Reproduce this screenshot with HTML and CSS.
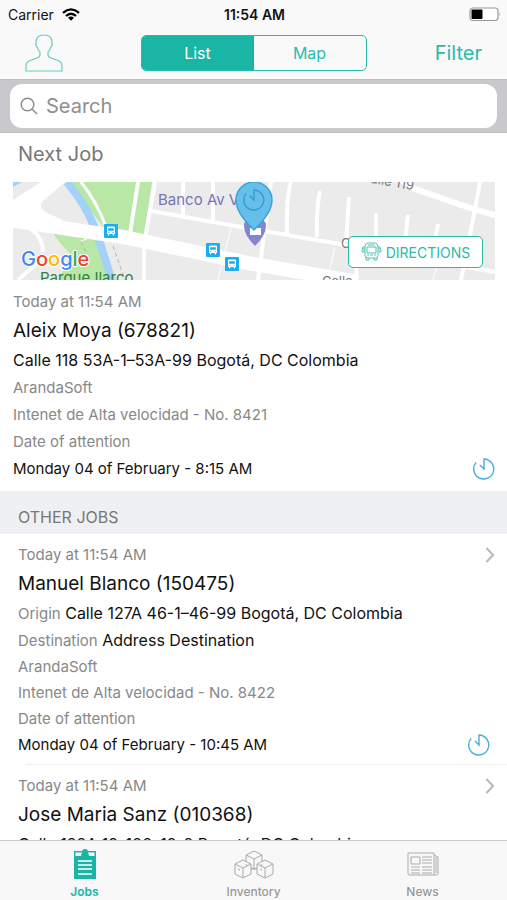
FILE: index.html
```html
<!DOCTYPE html>
<html lang="en">
<head>
<meta charset="utf-8">
<meta name="viewport" content="width=device-width, initial-scale=1">
<title>Jobs</title>
<link rel="stylesheet" href="styles.css">
</head>
<body>
<svg class="defs" aria-hidden="true">
  <defs>
    <symbol id="clock" viewBox="0 0 22 22"><path d="M3.200 4.400A10 10 0 1 0 11 1V11L7 7" fill="none" stroke="currentColor" stroke-width="1.400"/></symbol>
    <symbol id="chevron" viewBox="0 0 10 16"><path d="M1.500 1L8 8l-6.500 7" fill="none" stroke="#bbb" stroke-width="2.200"/></symbol>
    <symbol id="bus" viewBox="0 0 14 14"><rect width="14" height="14" rx="1" fill="#1aaef0"/><path d="M3 3.500Q3 2.500 4 2.500H10Q11 2.500 11 3.500V10H10v1.500H8.800V10H5.200v1.500H4V10H3z" fill="#fff"/><path d="M4.200 4.200h5.600v2.600H4.200zM4.400 8h1v1h-1zM8.600 8h1v1h-1z" fill="#1aaef0"/></symbol>
  </defs>
</svg>
<div class="app">
  <header>
    <div class="status">
      <div class="carrier"><span>Carrier</span>
        <svg width="18" height="13" viewBox="0 0 18 13" aria-hidden="true"><g fill="none" stroke="#000" stroke-width="2.300"><path d="M1 4.800Q9-2 17 4.800"/><path d="M4 8Q9 3.600 14 8"/></g><path d="M6 9.700Q9 7.200 12 9.700L9 12.700z"/></svg>
      </div>
      <strong>11:54 AM</strong>
      <svg class="battery" width="32" height="15" viewBox="0 0 32 15" aria-hidden="true"><rect x="1" y="1" width="28" height="12.500" rx="3" fill="#fff" stroke="#999" stroke-width="1.200"/><rect x="2.500" y="2.500" width="11" height="9.500" rx="1"/><path d="M30.500 5q1.500 2 0 4.500z" fill="#999"/></svg>
    </div>
    <nav class="toolbar">
      <button class="profile" aria-label="Profile"><svg width="38" height="38" viewBox="0 0 38 38" aria-hidden="true"><path d="M1 37V32Q1 28 5 26.500L12 24Q15 23 15 20.500V18Q12.500 16 12.200 13Q10.300 12 11 9.500Q10.500 1 19 1T27 9.500Q27.700 12 25.800 13Q25.500 16 23 18V20.500Q23 23 26 24L33 26.500Q37 28 37 32V37z" fill="none" stroke="#67cdbd" stroke-width="1.200"/></svg></button>
      <div class="segments"><button class="selected">List</button><button>Map</button></div>
      <button class="filter">Filter</button>
    </nav>
  </header>
  <div class="search">
    <label class="field">
      <svg width="18" height="18" viewBox="0 0 18 18" aria-hidden="true"><circle cx="7.500" cy="7.500" r="6.300"/><path d="M12 12l5 5"/></svg>
      <input type="search" placeholder="Search" aria-label="Search">
    </label>
  </div>
  <main>
    <h2>Next Job</h2>
    <section class="next">
      <div class="map">
        <svg class="streets" viewBox="0 0 482 98" preserveAspectRatio="xMidYMid slice" role="img" aria-label="Map">
          <rect width="482" height="98" fill="#ebebeb"/>
          <path d="M54 0H139L131 55 92 47 75 25z M34 43L86 58 103 98H45L58 73 47 61z" fill="#b9e8a6"/>
          <path d="M54 0Q72 22 80 42T99 100" fill="none" stroke="#a3d1f8" stroke-width="8"/>
          <path d="M0 5L9 0H0z" fill="#a3d1f8"/>
          <g fill="none" stroke="#fff">
            <path d="M-5 38L110 55 240 82 345 100" stroke-width="14"/>
            <path d="M0 18L28 0H52L29 20Q25 26 34 31L50 38 30 46H0z" fill="#fff" stroke="none"/>
            <path d="M14 44Q30 54 30 70M5 98L30 76" stroke-width="4"/>
            <path d="M68 0Q84 20 93 45" stroke-width="3"/>
            <path d="M125 0L117 52M142 0L132 56M139 29L239 47 338 64 482 90M131 60V98M170 0V33M200 0V38M258 0L245 98" stroke-width="4"/>
            <path d="M278 0Q273 15 274 52M307 9Q303 28 304 55M336 15L333 60M363 31V58M395 33L392 58M425 42L422 58M467 0Q456 60 448 98M344 76L343 98" stroke-width="4"/>
            <path d="M385-4L402 7 460 27 485 34" stroke-width="6"/>
            <path d="M218 46Q208 85 205 98M322 65L316 90M425 80L420 98M68 59L82 54" stroke-width="1"/>
          </g>
          <path d="M100 64L112 98M68 60L74 72" fill="none" stroke="#aab8ab" stroke-dasharray="4 3"/>
          <g class="road-label"><text x="348" y="-1" transform="rotate(10 348 -1)">Calle 119</text><text x="328" y="66">Calle</text><text x="309" y="104">Calle</text></g>
          <text class="park" x="27" y="101">Parque Ilarco</text>
          <text class="place" x="145" y="23">Banco Av Villas</text>
          <path d="M231 44Q231 36 242 36T253 44Q253 53 242 64Q231 53 231 44z" fill="#8584d3"/><path d="M237 46h11v7h-11z" fill="#fff"/>
          <path d="M241 48Q223 31 223 18A18 18 0 0 1 259 18Q259 31 241 48z" fill="#66bfe9" stroke="#35a5db" stroke-width="1.500"/>
          <use href="#clock" x="230" y="7" width="22" height="22" color="#2d9ed4"/>
          <use href="#bus" x="91" y="42" width="14" height="14"/><use href="#bus" x="193" y="61" width="14" height="14"/><use href="#bus" x="212" y="75" width="14" height="14"/>
          <text class="google" x="8" y="84"><tspan fill="#4285f4">G</tspan><tspan fill="#ea4335">o</tspan><tspan fill="#fbbc05">o</tspan><tspan fill="#4285f4">g</tspan><tspan fill="#34a853">l</tspan><tspan fill="#ea4335">e</tspan></text>
        </svg>
        <button class="directions"><svg width="21" height="20" viewBox="0 0 21 20" aria-hidden="true"><g fill="none" stroke="#4fc6b6"><path d="M4 5Q4 1 7 1H14Q17 1 17 5V14L15 16H6L4 14zM6 5h9v6H6zM7 3h7M4 5H2L1 8v2h2V6M17 5h2l1 3v2h-2V6M5 15v3h3v-2M16 15v3h-3v-2M6 13h2M13 13h2M9 13h3"/></g></svg><span>DIRECTIONS</span></button>
      </div>
      <article class="job">
        <p class="muted">Today at 11:54 AM</p>
        <h3>Aleix Moya (678821)</h3>
        <p class="address">Calle 118 53A-1–53A-99 Bogotá, DC Colombia</p>
        <p class="muted">ArandaSoft</p>
        <p class="muted">Intenet de Alta velocidad - No. 8421</p>
        <p class="muted">Date of attention</p>
        <p class="row">Monday 04 of February - 8:15 AM <svg class="clock"><use href="#clock"/></svg></p>
      </article>
    </section>
    <h2 class="band">OTHER JOBS</h2>
    <section class="others">
      <article class="job">
        <p class="muted row">Today at 11:54 AM <svg class="chevron"><use href="#chevron"/></svg></p>
        <h3>Manuel Blanco (150475)</h3>
        <p class="address"><span class="muted">Origin</span> Calle 127A 46-1–46-99 Bogotá, DC Colombia</p>
        <p class="address"><span class="muted">Destination</span> Address Destination</p>
        <p class="muted">ArandaSoft</p>
        <p class="muted">Intenet de Alta velocidad - No. 8422</p>
        <p class="muted">Date of attention</p>
        <p class="row">Monday 04 of February - 10:45 AM <svg class="clock"><use href="#clock"/></svg></p>
      </article>
      <hr>
      <article class="job">
        <p class="muted row">Today at 11:54 AM <svg class="chevron"><use href="#chevron"/></svg></p>
        <h3>Jose Maria Sanz (010368)</h3>
        <p class="address">Calle 122A 19-100–19-2 Bogotá, DC Colombia</p>
      </article>
    </section>
  </main>
  <nav class="tabs">
    <a class="active" href="#jobs"><svg width="24" height="32" viewBox="0 0 24 32" aria-hidden="true"><path d="M1 3H23V31H1z" fill="#19b5a5"/><path d="M2.500 4.500H21.500V8H2.500z" fill="#fff"/><path d="M8 8Q8 5 10 5h4q2 0 2 3z" fill="#19b5a5"/><circle cx="12" cy="4" r="3" fill="#19b5a5"/><path d="M5 13H19M5 17H19M5 21H19M5 26H19" stroke="#fff" stroke-width="1.300"/></svg>Jobs</a>
    <a href="#inventory"><svg width="40" height="32" viewBox="0 0 40 32" aria-hidden="true"><g fill="#f8f8f8" stroke="#aaa" stroke-linejoin="round"><path d="M12 7L20 3 28 7V17L20 21 12 17zM12 7L20 11 28 7M20 11V21"/><path d="M1 16L9 12 17 16V26L9 30 1 26zM1 16L9 20 17 16M9 20V30M4 21L6 22"/><path d="M23 16L31 12 39 16V26L31 30 23 26zM23 16L31 20 39 16M31 20V30M26 21L28 22M17 21h6"/></g></svg>Inventory</a>
    <a href="#news"><svg width="32" height="32" viewBox="0 0 32 32" aria-hidden="true"><g fill="none" stroke="#aaa"><path d="M1 5H27V27H3Q1 27 1 25zM27 7L31 9V26Q31 27 29 27H27M29 9V25"/><path d="M4 9H13V16H4zM15 9H25M15 12H25M15 15H25M4 19H13M4 22H13M4 25H13M15 19H25M15 22H25M15 25H25"/></g></svg>News</a>
  </nav>
</div>
</body>
</html>
```
FILE: styles.css
```css
* { box-sizing: border-box; }
body { margin: 0; background: #fff; color: #111; font-family: Inter, "Liberation Sans", sans-serif; font-size: 15px; }
button, input { font: inherit; color: inherit; border: 0; background: none; padding: 0; }
h2, h3, p { margin: 0; font-weight: 400; }
.defs { position: absolute; width: 0; height: 0; }
.app { height: 100vh; display: flex; flex-direction: column; overflow: hidden; }
header { background: #f9f9f9; }
.status { display: grid; grid-template-columns: 1fr auto 1fr; align-items: center; height: 28px; padding: 0 6px 0 8px; font-size: 14px; }
.status strong { font-weight: 600; }
.carrier { display: flex; align-items: center; gap: 8px; }
.battery { justify-self: end; }
.toolbar { display: grid; grid-template-columns: 1fr 226px 1fr; align-items: center; height: 51px; padding: 0 25px 2px; color: #2cb9aa; }
.profile { justify-self: start; display: flex; }
.segments { display: flex; height: 36px; border: 1px solid #2cb9aa; border-radius: 5px; overflow: hidden; font-size: 16px; }
.segments button { flex: 1; }
.segments .selected { background: #19b5a5; color: #fff; }
.filter { justify-self: end; font-size: 20px; }
.search { padding: 4px 10px; background: #c8c8cd; border: solid #bfbfc2; border-width: 1px 0; }
.field { display: flex; align-items: center; gap: 8px; height: 44px; padding: 0 10px; border-radius: 12px; background: #fff; }
.field svg { fill: none; stroke: #8e8e8e; stroke-width: 1.500; }
.field input { flex: 1; min-width: 0; font-size: 20px; outline: 0; }
.field input::placeholder { color: #8e8e8e; opacity: 1; }
main { flex: 1; min-height: 0; overflow: hidden; }
h2 { padding: 0 18px; font-size: 20px; line-height: 42px; color: #777; }
.next { padding: 7px 12px 9px 13px; }
.map { position: relative; }
.streets { display: block; width: 100%; height: 98px; }
.road-label { font-size: 13px; fill: #777; }
.park { font-size: 15px; fill: #2f7f3f; }
.place { font-size: 15px; fill: #7774b5; }
.google { font-size: 20px; font-weight: 500; stroke: #fff; stroke-width: 2px; paint-order: stroke; }
.directions { position: absolute; right: 12px; bottom: 12px; display: flex; align-items: center; justify-content: center; gap: 4px; width: 135px; height: 32px; border: 1px solid #2cb9aa; border-radius: 5px; background: #fff; color: #2cb9aa; font-size: 14px; }
.job { line-height: 27px; }
.next .job { padding-top: 8px; }
h3 { font-size: 19px; line-height: 32px; }
.address { font-size: 16px; }
.muted { color: #888; font-size: 15px; }
.row { display: flex; align-items: center; justify-content: space-between; }
.clock { width: 22px; height: 22px; color: #45aede; }
.chevron { width: 10px; height: 16px; }
h2.band { background: #eff0f4; font-size: 16px; padding-top: 10px; line-height: 33px; }
.others .job { line-height: 26px; padding: 8px 12px 6px 18px; }
.others .clock { margin-right: 5px; }
hr { margin: 0 0 0 26px; border: 0; border-top: 1px solid #eee; }
.tabs { display: grid; grid-template-columns: repeat(3, 1fr); height: 60px; border-top: 1px solid #ccc; background: #f8f8f8; }
.tabs a { display: flex; flex-direction: column; align-items: center; gap: 4px; padding-top: 7px; color: #999; text-decoration: none; font-size: 12px; line-height: 15px; font-weight: 500; }
.tabs .active { color: #19b5a5; font-weight: 600; }
```
